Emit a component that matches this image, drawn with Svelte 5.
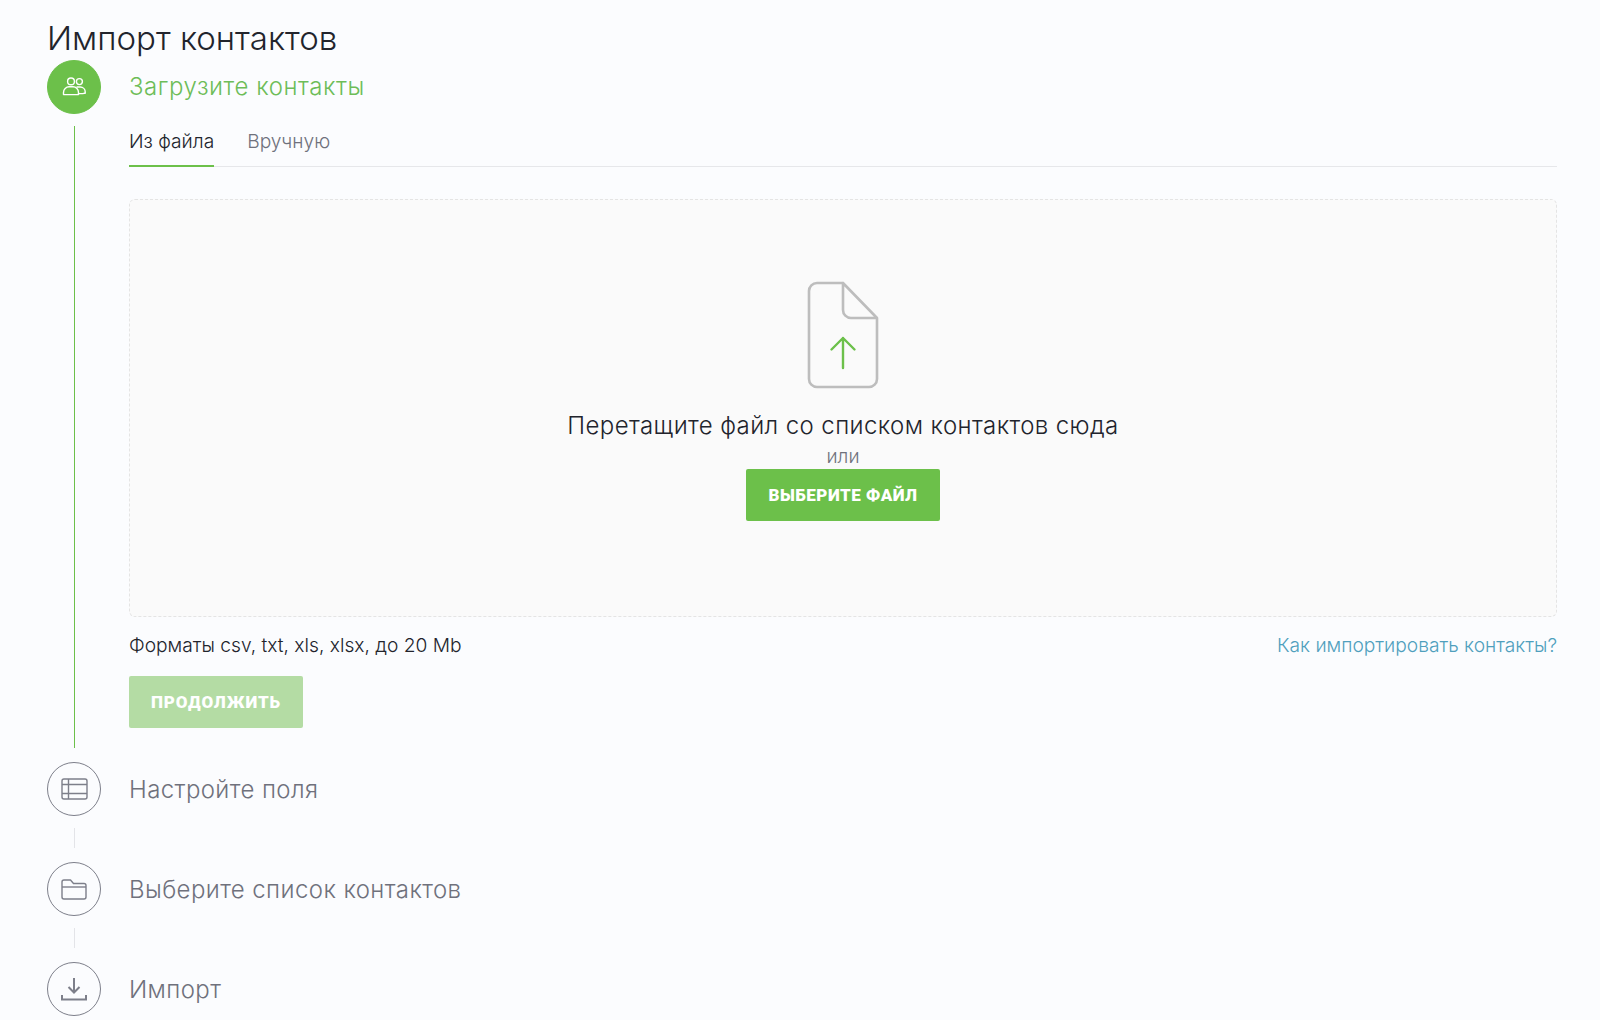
<script>
  const tabs = ["Из файла", "Вручную"];
  let active = $state(0);
</script>

<div class="page">
  <h1>Импорт контактов</h1>

  <section class="step current">
    <div class="rail">
      <div class="circle">
        <svg width="28" height="28" viewBox="0 0 28 28" fill="none" stroke="#fff" stroke-width="1.4" stroke-linecap="round" stroke-linejoin="round">
          <circle cx="11" cy="8.400" r="3.400" />
          <circle cx="19.400" cy="8.600" r="3" />
          <path d="M3.500 21.600v-2.200c0-3.200 2.600-5.600 5.600-5.600h4c3 0 5.400 2.400 5.400 5.600v2.200z" />
          <path d="M17 14h3.200c2.800 0 5 2.100 5 4.800v1.400h-1.200a1 1 0 0 1-.8.400h-4.700" />
        </svg>
      </div>
      <div class="line long"></div>
    </div>
    <div class="body">
      <h2>Загрузите контакты</h2>
      <div class="tabs">
        {#each tabs as tab, i}
          <button class="tab" class:active={active === i} onclick={() => (active = i)}>{tab}</button>
        {/each}
      </div>
      <div class="drop">
        <svg class="file" width="72" height="108" viewBox="0 0 72 108" fill="none" stroke-linecap="round" stroke-linejoin="round">
          <path stroke="#bdbdbd" stroke-width="2.600" d="M36 2H10a8 8 0 0 0-8 8v88a8 8 0 0 0 8 8h52a8 8 0 0 0 8-8V37L36 2v27a8 8 0 0 0 8 8h26" />
          <path stroke="#6cc04a" stroke-width="2.400" d="M36 87V57M24.500 68.500 36 57l11.500 11.500" />
        </svg>
        <p class="hint">Перетащите файл со списком контактов сюда</p>
        <span class="or">или</span>
        <button class="btn">Выберите файл</button>
      </div>
      <div class="info">
        <span>Форматы csv, txt, xls, xlsx, до 20 Mb</span>
        <a href="#help">Как импортировать контакты?</a>
      </div>
      <button class="btn next" disabled>Продолжить</button>
    </div>
  </section>

  <section class="step">
    <div class="rail">
      <div class="circle">
        <svg width="28" height="28" viewBox="0 0 28 28" fill="none" stroke="#7d7f8a" stroke-width="1.400" stroke-linejoin="round">
          <rect x="2" y="4" width="25" height="20" rx="2" />
          <path d="M2 9.500h25M2 18.500h25M8.500 4v20" />
        </svg>
      </div>
      <div class="line"></div>
    </div>
    <h2>Настройте поля</h2>
  </section>

  <section class="step">
    <div class="rail">
      <div class="circle">
        <svg width="28" height="28" viewBox="0 0 28 28" fill="none" stroke="#7d7f8a" stroke-width="1.400" stroke-linejoin="round">
          <path d="M2 7a2 2 0 0 1 2-2h6.500l3 3.500H24a2 2 0 0 1 2 2V22a2 2 0 0 1-2 2H4a2 2 0 0 1-2-2z" />
          <path d="M2 12h24" />
        </svg>
      </div>
      <div class="line"></div>
    </div>
    <h2>Выберите список контактов</h2>
  </section>

  <section class="step">
    <div class="rail">
      <div class="circle">
        <svg width="28" height="28" viewBox="0 0 28 28" fill="none" stroke="#7d7f8a" stroke-width="2">
          <path d="M14 3v14M8.500 12 14 17.500 19.500 12" />
          <path d="M2 20v4.500h24V20" />
        </svg>
      </div>
    </div>
    <h2>Импорт</h2>
  </section>
</div>

<style>
  :global(body) {
    background: #fbfcfe;
    font-family: Inter, "Noto Sans", sans-serif;
    color: #22242c;
  }

  .page {
    height: 1020px;
    overflow: hidden;
    padding: 16px 43px 0 47px;
    box-sizing: border-box;
  }

  h1 {
    margin: 0;
    font-size: 33px;
    font-weight: 300;
    line-height: 44px;
    height: 44px;
  }

  .step {
    display: flex;
    gap: 28px;
  }

  .rail {
    display: flex;
    flex-direction: column;
    align-items: center;
    flex: none;
    width: 54px;
  }

  .circle {
    width: 54px;
    height: 54px;
    box-sizing: border-box;
    border: 1px solid #7d7f8a;
    border-radius: 50%;
    display: flex;
    align-items: center;
    justify-content: center;
    flex: none;
  }

  .current .circle {
    background: #6cc04a;
    border-color: #6cc04a;
  }

  .line {
    width: 1px;
    height: 20px;
    margin: 12px 0 14px;
    background: #e3e4e8;
  }

  .line.long {
    height: 622px;
    background: #6cc04a;
  }

  h2 {
    margin: 0;
    font-size: 24px;
    font-weight: 300;
    line-height: 56px;
    letter-spacing: 0.4px;
    color: #6f717c;
  }

  .current h2 {
    color: #6dbd58;
    line-height: 54px;
    letter-spacing: 0.55px;
  }

  .body {
    flex: 1;
    min-width: 0;
  }

  .tabs {
    display: flex;
    gap: 33px;
    height: 53px;
    box-sizing: border-box;
    border-bottom: 1px solid #e6e7ea;
  }

  .tab {
    padding: 0;
    height: 53px;
    background: none;
    border: 0;
    border-bottom: 2px solid transparent;
    font: 300 19.200px/54px Inter, sans-serif;
    color: #6f717c;
  }

  .tab.active {
    color: #22242c;
    border-bottom-color: #6cc04a;
  }

  .drop {
    margin-top: 32px;
    height: 418px;
    box-sizing: border-box;
    padding-top: 81px;
    border: 1px dashed #e4e4e4;
    border-radius: 6px;
    background: #fafafa;
    display: flex;
    flex-direction: column;
    align-items: center;
  }

  .file {
    flex: none;
  }

  .hint {
    margin: 22px 0 0;
    font-size: 24px;
    font-weight: 300;
    line-height: 30px;
    letter-spacing: 0.4px;
  }

  .or {
    margin-top: 4px;
    font-size: 19px;
    font-weight: 300;
    line-height: 24px;
    color: #6f717c;
  }

  .btn {
    width: 194px;
    height: 52px;
    padding: 0;
    border: 0;
    border-radius: 2px;
    background: #6cc04a;
    color: #fff;
    font: 900 17px/52px Roboto, sans-serif;
    letter-spacing: 0.5px;
    text-transform: uppercase;
  }

  .info {
    display: flex;
    justify-content: space-between;
    margin-top: 15px;
    font-size: 19.200px;
    font-weight: 300;
    line-height: 26px;
  }

  .info a {
    color: #4f9fbd;
    text-decoration: none;
  }

  .next {
    display: block;
    margin-top: 18px;
    width: 174px;
    background: #b4dca4;
    letter-spacing: 0.9px;
  }
</style>
